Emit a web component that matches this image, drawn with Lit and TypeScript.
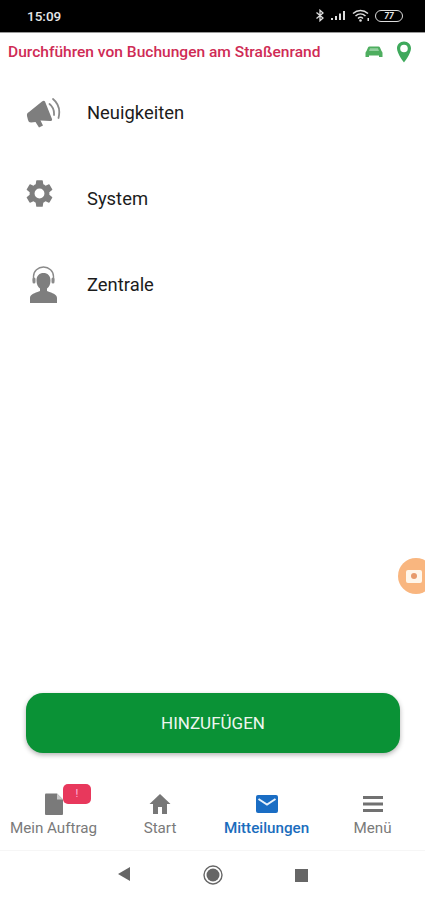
import { LitElement, html, css } from "lit";
import { customElement } from "lit/decorators.js";

@customElement("app-root")
export class AppRoot extends LitElement {
  static styles = css`
    :host { display: block; }
    .page {
      width: 425px; height: 900px; background: #fff; position: relative; overflow: hidden;
      display: flex; flex-direction: column;
      font-family: Roboto, "Liberation Sans", sans-serif;
    }
    .status {
      height: 33px; flex: none; background: #000; color: #e8e8e8; display: flex; align-items: center;
      padding: 0 22px 0 27px; box-sizing: border-box; font-size: 13.5px; font-weight: 500;
      border-bottom: 1px solid #999; justify-content: space-between;
    }
    .status-icons { display: flex; align-items: center; gap: 5px; margin-top: -1px; }
    .status svg { display: block; }
    .batt {
      width: 28px; height: 12px; border: 1px solid #ddd; border-radius: 6px; box-sizing: border-box;
      font-size: 8.5px; line-height: 10px; text-align: center; font-style: italic; font-weight: 700; color: #e8e8e8;
    }
    .header {
      height: 37px; flex: none; display: flex; align-items: center; padding: 0 13px 0 8px;
      justify-content: space-between;
    }
    .title { color: #cf2b55; font-size: 15.55px; font-weight: 500; white-space: nowrap; }
    .header-icons { display: flex; align-items: center; gap: 13px; }
    .header-icons svg { display: block; }
    .list { display: flex; flex-direction: column; flex: 1; }
    .row { height: 85.7px; display: flex; align-items: center; flex: none; }
    .row-ic { width: 87px; flex: none; display: flex; justify-content: flex-start; padding-left: 25px; box-sizing: border-box; }
    .row-ic svg { display: block; }
    .row-t { font-size: 18.4px; color: #1c1c1c; }
    .gear { margin: -11px 0 0 -2px; }
    .person { margin-left: 5px; }
    .btn-wrap { padding: 0 25px 0 26px; flex: none; }
    .btn {
      height: 60px; border-radius: 17px; background: #0a9236; color: #eef6ef; display: flex;
      align-items: center; justify-content: center; font-size: 17px; font-weight: 400;
      box-shadow: 0 2px 5px rgba(0,0,0,.3);
    }
    .tabs { height: 81px; margin-top: 16px; flex: none; display: grid; grid-template-columns: 107px 106px 107px 105px; padding-top: 23px; box-sizing: border-box; }
    .tab { display: flex; flex-direction: column; align-items: center; color: #7a7a7a; font-size: 15.2px; position: relative; }
    .tab svg { display: block; height: 24px; }
    .tab span.l { margin-top: 4px; line-height: 17px; white-space: nowrap; }
    .tab.active { color: #1a6dbd; font-weight: 500; }
    .badge {
      position: absolute; left: 63px; top: -8px; width: 28px; height: 20px; border-radius: 5px;
      background: #e8385c; color: #fbd; font-size: 11px; line-height: 20px; text-align: center;
    }
    .navbar { height: 50px; flex: none; border-top: 1px solid #f6f6f6; box-sizing: border-box; position: relative; }
    .nav-i { position: absolute; top: 15px; display: block; }
    .nav-back { left: 116px; }
    .nav-home { left: 203px; top: 14px; }
    .nav-recent { left: 295px; top: 18px; }
    .fab {
      position: absolute; left: 398px; top: 558px; width: 36px; height: 36px; border-radius: 50%;
      background: #f9b67f; display: flex; align-items: center; padding-left: 8px; box-sizing: border-box;
    }
    .fab-in { width: 16px; height: 13px; background: #fff6ea; border-radius: 2px; display: flex; align-items: center; justify-content: center; }
    .fab-in i { width: 6px; height: 6px; background: #e79a6c; border-radius: 50%; display: block; }
  `;

  render() {
    return html`
      <div class="page">
        <div class="status">
          <span>15:09</span>
          <div class="status-icons">
            <svg width="10" height="13" viewBox="0 0 10 13"><path d="M1.5 3.5 8 9l-3 2.700V1.300L8 4 1.500 9.500" fill="none" stroke="#ddd" stroke-width="1.300"/></svg>
            <svg width="17" height="11" viewBox="0 0 17 11"><path d="M1 10h2V8H1zM5 10h2V6H5zM9 10h2V3.500H9zM13 10h2V1h-2z" fill="#ddd"/></svg>
            <svg width="18" height="13" viewBox="0 0 18 13"><path d="M1 4.500C5.500.5 11.500.5 16 4.500M3.500 7C6.500 4.200 10.500 4.200 13.500 7M6 9.500c1.500-1.400 3.500-1.400 5 0" fill="none" stroke="#ddd" stroke-width="1.500"/><circle cx="8.500" cy="11.500" r="1.300" fill="#ddd"/><rect x="15.500" y="9" width="1.500" height="3" fill="#ddd"/></svg>
            <div class="batt">77</div>
          </div>
        </div>
        <div class="header">
          <span class="title">Durchführen von Buchungen am Straßenrand</span>
          <div class="header-icons">
            <svg width="18" height="14" viewBox="0 0 18 14"><path d="M4.500 1.500h9q1 0 1.500 1L16.500 6q1 .8 1 2v4h-3.500v-1.500H4V12H.5V8q0-1.200 1-2L3 2.500q.5-1 1.500-1z" fill="#4eae5f"/><path d="M5 3.200h8l1 2.800H4z" fill="#93cf9f"/></svg>
            <svg width="16" height="22" viewBox="0 0 16 22"><path fill-rule="evenodd" d="M8 .5C3.900.5 1 3.600 1 7.500 1 12.500 8 21.500 8 21.500S15 12.500 15 7.500C15 3.600 12.100.5 8 .5zM8 3.700a3.800 3.800 0 1 1 0 7.600 3.800 3.800 0 0 1 0-7.600z" fill="#3fa95c"/></svg>
          </div>
        </div>
        <div class="list">
          <div class="row">
            <div class="row-ic">
              <svg width="37" height="32" viewBox="0 0 37 32"><path d="M2 19Q1.500 16 4 15L17 4.500Q19 3 20 4.500L27 22Q27.500 24 25 24L15.500 23.500 18 28.500 14 30.500 10.500 25 6 25.500Q3.500 25.500 3 23z" fill="#7e7e7e"/><path d="M24.500 7Q29.500 11 29 18M28 2Q36.500 9 33.500 21" fill="none" stroke="#8a8a8a" stroke-width="1.800" stroke-linecap="round"/></svg>
            </div>
            <span class="row-t">Neuigkeiten</span>
          </div>
          <div class="row">
            <div class="row-ic">
              <svg class="gear" width="33" height="33" viewBox="0 0 24 24"><path fill="#7e7e7e" d="M19.140 12.940c.04-.3.060-.61.060-.94 0-.32-.02-.64-.07-.94l2.030-1.580a.49.49 0 0 0 .12-.61l-1.920-3.320a.49.49 0 0 0-.59-.22l-2.390.96c-.5-.38-1.030-.7-1.620-.94l-.36-2.540a.48.48 0 0 0-.48-.41h-3.840c-.24 0-.43.170-.47.41l-.36 2.540c-.59.240-1.130.57-1.620.94l-2.390-.96a.49.49 0 0 0-.59.22L2.740 8.870c-.12.21-.08.47.12.61l2.030 1.580c-.05.3-.09.63-.09.94s.02.64.07.94l-2.030 1.580a.49.49 0 0 0-.12.61l1.920 3.320c.12.22.37.29.59.22l2.390-.96c.5.380 1.030.7 1.620.94l.36 2.540c.05.240.24.410.48.410h3.840c.24 0 .44-.17.47-.41l.36-2.540c.59-.240 1.130-.56 1.620-.94l2.390.96c.22.080.47 0 .59-.22l1.920-3.320c.12-.22.07-.47-.12-.61zM12 15.600A3.600 3.600 0 1 1 12 8.400a3.600 3.600 0 0 1 0 7.200z"/></svg>
            </div>
            <span class="row-t">System</span>
          </div>
          <div class="row">
            <div class="row-ic">
              <svg class="person" width="27" height="37" viewBox="0 0 27 37"><path d="M0 37v-5c0-3 3-4.500 7.500-6l2.500-1v-2.500C8 21 6.500 18.500 6.500 14.500c0-5 3-7.500 7-7.500s7 2.500 7 7.500c0 4-1.500 6.500-3.500 8V25l2.500 1c4.500 1.500 7.500 3 7.500 6v5z" fill="#7e7e7e"/><path d="M3.500 15V10.500C3.500 5 8 1 13.500 1s10 4 10 9.500V15" fill="none" stroke="#8a8a8a" stroke-width="1.400"/><rect x="2.500" y="11.500" width="3" height="6" rx="1.500" fill="#8a8a8a"/><rect x="21.500" y="11.500" width="3" height="6" rx="1.500" fill="#8a8a8a"/></svg>
            </div>
            <span class="row-t">Zentrale</span>
          </div>
        </div>
        <div class="btn-wrap"><div class="btn">HINZUFÜGEN</div></div>
        <div class="tabs">
          <div class="tab">
            <svg width="24" height="24" viewBox="0 0 24 24"><path d="M4 1.500h11l6 6V22q0 1-1 1H4q-1 0-1-1V2.500q0-1 1-1z" fill="#7a7a7a"/><path d="M15 1.500l6 6h-6z" fill="#c9c9c9"/></svg>
            <span class="l">Mein Auftrag</span>
            <div class="badge">!</div>
          </div>
          <div class="tab">
            <svg width="24" height="24" viewBox="0 0 24 24"><path d="M12 2 1.500 12H5v10h5v-7h4v7h5V12h3.500z" fill="#777"/></svg>
            <span class="l">Start</span>
          </div>
          <div class="tab active">
            <svg width="24" height="24" viewBox="0 0 24 24"><rect x="1" y="3" width="22" height="18" rx="2" fill="#1a6dc4"/><path d="M3.500 7 12 12.500 20.500 7" fill="none" stroke="#e8f1fb" stroke-width="2"/></svg>
            <span class="l">Mitteilungen</span>
          </div>
          <div class="tab">
            <svg width="24" height="24" viewBox="0 0 24 24"><path d="M2 4h20v3H2zM2 10.500h20v3H2zM2 17h20v3H2z" fill="#717171"/></svg>
            <span class="l">Menü</span>
          </div>
        </div>
        <div class="navbar">
          <svg class="nav-i nav-back" width="16" height="16" viewBox="0 0 16 16"><path d="M14 1v14L2 8z" fill="#666"/></svg>
          <svg class="nav-i nav-home" width="20" height="20" viewBox="0 0 20 20"><circle cx="10" cy="10" r="9" fill="none" stroke="#666" stroke-width="1.400"/><circle cx="10" cy="10" r="6.500" fill="#666"/></svg>
          <svg class="nav-i nav-recent" width="13" height="13" viewBox="0 0 13 13"><rect width="13" height="13" fill="#666"/></svg>
        </div>
        <div class="fab"><div class="fab-in"><i></i></div></div>
      </div>
    `;
  }
}
